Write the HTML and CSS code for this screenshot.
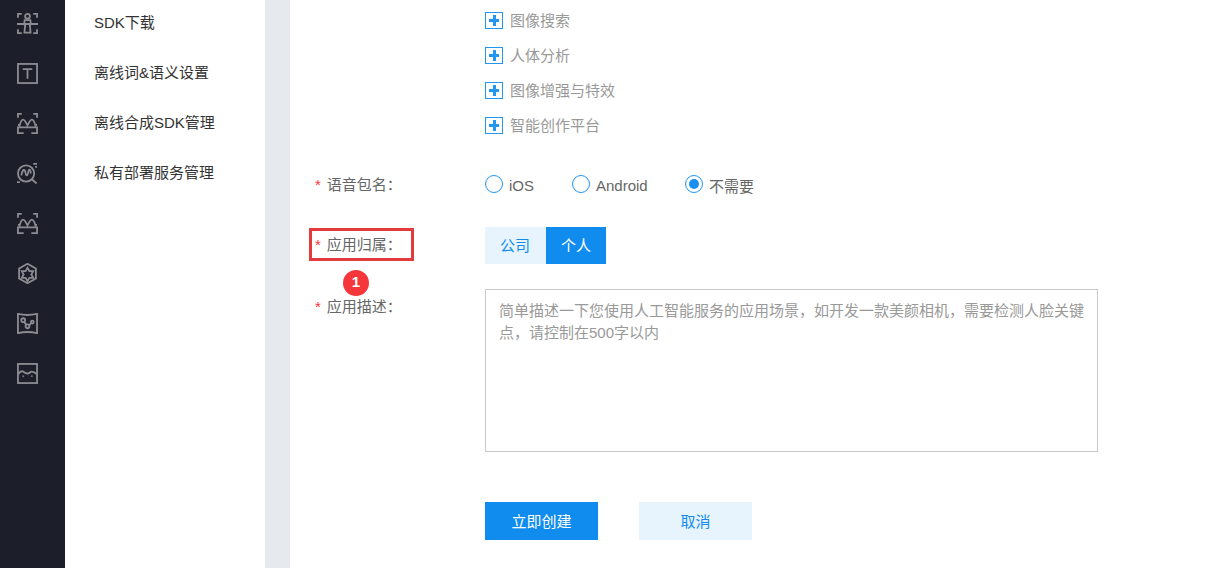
FILE: index.html
```html
<!DOCTYPE html>
<html lang="zh">
<head>
<meta charset="utf-8">
<title>创建应用</title>
<link rel="stylesheet" href="styles.css">
</head>
<body>
<div class="page">
  <nav class="rail">
    <svg class="ico" viewBox="0 0 22 22"><path d="M1 5V1h4M17 1h4v4M1 17v4h4M21 17v4h-4M0 11.500h22"/><circle cx="11" cy="3.500" r="2.500"/><path d="M8 7.500h6l.5 4.500-1 1 .7 7.500H7.800l.7-7.500-1-1z"/></svg>
    <svg class="ico" viewBox="0 0 22 22"><rect x="1" y="1" width="20" height="20"/><path d="M6 6.500h10M11 6.500v10"/></svg>
    <svg class="ico" viewBox="0 0 22 22"><path d="M1 5V1h4M17 1h4v4M1 15v6h6M21 15v6h-6M0 15h22M2.500 14c1-4 2.500-7 4-7s2.500 2 4.500 6c2-4 3-6 4.500-6s3 3 4 7M1 12.500h2M19 12.500h2"/></svg>
    <svg class="ico" viewBox="0 0 22 22"><circle cx="9.500" cy="11" r="8.500"/><path d="M4.500 13c1-5 2.500-6.500 3.500-5.500s1 6 2.500 5.500 1-6 2.500-6 1 2 1.500 4M15.500 17l5 4.500M17 1h4M19 4h2M0 20h3"/></svg>
    <svg class="ico" viewBox="0 0 22 22"><path d="M1 5V1h4M17 1h4v4M1 15v6h6M21 15v6h-6M0 15h22M2.500 14c1-4 2.500-7 4-7s2.500 2 4.500 6c2-4 3-6 4.500-6s3 3 4 7M1 12.500h2M19 12.500h2"/></svg>
    <svg class="ico" viewBox="0 0 22 22"><path d="M11 .8l8.800 5v10.400L11 21.200l-8.800-5V5.800z"/><path d="M11 5l2 3.500h4L15 12l2 3.500h-4L11 19l-2-3.500H5L7 12 5 8.500h4z"/></svg>
    <svg class="ico" viewBox="0 0 22 22"><path d="M1 1c7 1.500 13 1.500 20 0v20c-7-1.500-13-1.500-20 0z"/><circle cx="6.500" cy="7.500" r="2"/><circle cx="11" cy="14" r="2"/><circle cx="16" cy="9.500" r="1.500"/><path d="M7.500 9.500l2.500 3M12.500 13l2.500-2.500"/></svg>
    <svg class="ico" viewBox="0 0 22 22"><rect x="1" y="1" width="20" height="20"/><path d="M1 12c2-3 4-4 5.500-3s2 2 4.500 2 2.500-2 4.500-2 3.500 1 5.500 3"/><path d="M6.500 13v1.500M15.500 13v1.500"/></svg>
  </nav>

  <aside class="submenu">
    <a class="submenu-item">SDK下载</a>
    <a class="submenu-item">离线词&amp;语义设置</a>
    <a class="submenu-item">离线合成SDK管理</a>
    <a class="submenu-item">私有部署服务管理</a>
  </aside>

  <div class="divider"></div>

  <main class="content">
    <ul class="tree">
      <li class="tree-item"><span class="plus"></span><span class="tree-text">图像搜索</span></li>
      <li class="tree-item"><span class="plus"></span><span class="tree-text">人体分析</span></li>
      <li class="tree-item"><span class="plus"></span><span class="tree-text">图像增强与特效</span></li>
      <li class="tree-item"><span class="plus"></span><span class="tree-text">智能创作平台</span></li>
    </ul>

    <div class="row row-voice">
      <div class="label"><span class="req">*</span>语音包名：</div>
      <div class="radios">
        <label class="radio radio-ios"><span class="dot"></span>iOS</label>
        <label class="radio radio-android"><span class="dot"></span>Android</label>
        <label class="radio"><span class="dot dot-on"></span>不需要</label>
      </div>
    </div>

    <div class="row row-owner">
      <div class="label label-marked"><span class="req">*</span>应用归属：
        <span class="redbox"></span>
        <span class="badge">1</span>
      </div>
      <div class="toggle">
        <button class="tg tg-off">公司</button>
        <button class="tg tg-on">个人</button>
      </div>
    </div>

    <div class="row row-desc">
      <div class="label label-desc"><span class="req">*</span>应用描述：</div>
      <div class="textarea">简单描述一下您使用人工智能服务的应用场景，如开发一款美颜相机，需要检测人脸关键点，请控制在500字以内</div>
    </div>

    <div class="actions">
      <button class="btn btn-primary">立即创建</button>
      <button class="btn btn-light">取消</button>
    </div>
  </main>
</div>
</body>
</html>
```
FILE: styles.css
```css
* { box-sizing: border-box; }
html, body { margin: 0; height: 100%; overflow: hidden; }
body {
  font-family: "Liberation Sans", "Noto Sans CJK SC", sans-serif;
  font-size: 15px;
  color: #666;
  background: #fff;
}
.page { display: flex; height: 568px; }

.rail {
  width: 65px;
  flex: none;
  background: #1c1e29;
  display: flex;
  flex-direction: column;
  align-items: center;
  padding: 13px 10px 0 0;
  gap: 29px;
}
.ico {
  width: 21px;
  height: 21px;
  fill: none;
  stroke: #8b8c92;
  stroke-width: 1.900;
  display: block;
}

.submenu {
  width: 200px;
  flex: none;
  background: #fff;
  display: flex;
  flex-direction: column;
}
.submenu-item {
  height: 50px;
  line-height: 46px;
  padding-left: 29px;
  color: #333;
}

.divider { width: 25px; flex: none; background: #e6eaef; }

.content {
  flex: 1;
  padding-top: 3px;
  position: relative;
}

.tree { list-style: none; margin: 0; padding: 0 0 0 195px; }
.tree-item {
  height: 35px;
  display: flex;
  align-items: center;
  color: #999;
}
.tree-text { position: relative; top: -1px; }
.plus {
  width: 18px;
  height: 17px;
  border: 1px solid #2196f3;
  margin: -1px 7px 0 0;
  position: relative;
  flex: none;
}
.plus::before, .plus::after {
  content: "";
  position: absolute;
  background: #2196f3;
}
.plus::before { left: 3px; top: 6px; width: 10px; height: 3px; }
.plus::after { left: 6.500px; top: 2px; width: 3px; height: 11px; }

.row { display: flex; padding-left: 25px; }
.label {
  width: 170px;
  flex: none;
  color: #666;
  position: relative;
}
.req { color: #f33; margin-right: 6px; }

.row-voice { margin-top: 27px; height: 30px; align-items: center; }
.row-voice .label { top: -2px; }
.radios { display: flex; align-items: center; }
.radio { display: flex; align-items: center; color: #666; }
.radio-ios { width: 87px; }
.radio-android { width: 113px; }
.dot {
  width: 18px;
  height: 18px;
  border: 1.500px solid #2196f3;
  border-radius: 50%;
  margin: -3px 6px 0 0;
  flex: none;
  position: relative;
}
.dot-on::after {
  content: "";
  position: absolute;
  left: 3px;
  top: 3px;
  width: 10px;
  height: 10px;
  border-radius: 50%;
  background: #1890f0;
}

.row-owner { margin-top: 27px; height: 37px; align-items: center; }
.label-marked { line-height: 20px; top: -1px; }
.redbox {
  position: absolute;
  left: -6px;
  top: -7px;
  width: 105px;
  height: 33px;
  border: 3px solid #e33a3c;
}
.badge {
  position: absolute;
  left: 28px;
  top: 35px;
  width: 26px;
  height: 26px;
  border-radius: 50%;
  background: #f5363b;
  color: #fff;
  font-size: 15px;
  font-weight: 700;
  text-align: center;
  line-height: 24px;
}
.toggle { display: flex; }
.tg {
  width: 60px;
  height: 37px;
  border: 0;
  padding: 0 0 2px;
  font: inherit;
}
.tg-off { width: 61px; background: #e8f4fd; color: #108cee; padding-right: 1px; }
.tg-on { background: #108cee; color: #fff; }

.row-desc { margin-top: 25px; }
.label-desc { padding-top: 6px; }
.textarea {
  width: 613px;
  height: 163px;
  border: 1px solid #c8c8c8;
  padding: 10px 13px;
  color: #999;
  line-height: 22px;
}

.actions { display: flex; gap: 41px; padding-left: 195px; margin-top: 50px; }
.btn {
  width: 113px;
  height: 38px;
  border: 0;
  padding: 0 0 2px;
  font: inherit;
}
.btn-primary { background: #108cee; color: #fff; }
.btn-light { background: #e8f4fd; color: #108cee; }
```
